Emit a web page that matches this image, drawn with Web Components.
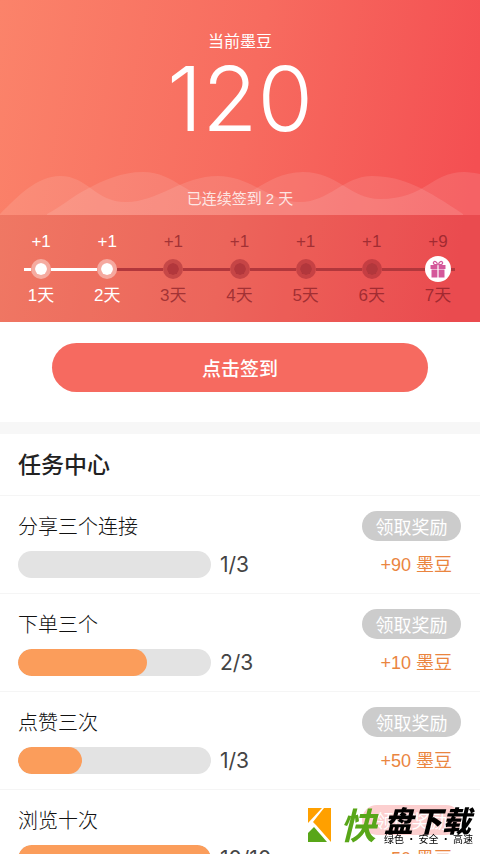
<!DOCTYPE html>
<html lang="zh-CN">
<head>
<meta charset="utf-8">
<meta name="viewport" content="width=device-width, initial-scale=1">
<title>任务中心</title>
<style>
body { margin: 0; background: #fff; color: #222; font-family: "Liberation Sans", "Noto Sans CJK SC", sans-serif; }
</style>
</head>
<body>
<reward-page></reward-page>
<script>
const define = (name, html, setup) => {
  const template = document.createElement('template');
  template.innerHTML = html;
  customElements.define(name, class extends HTMLElement {
    constructor() {
      super();
      this.attachShadow({ mode: 'open' }).append(template.content.cloneNode(true));
    }
    connectedCallback() { if (setup) setup(this, this.shadowRoot); }
  });
};

define('balance-header', `
<style>
:host { display: block; background: linear-gradient(100deg, #fb836a 0%, #f76b5f 50%, #f44f52 94%); color: #fff; }
.top { position: relative; display: grid; justify-items: center; padding: 30px 0 4px; }
.label { font-size: 16px; line-height: 24px; }
.value { font: 300 90px/90px Inter, "Liberation Sans", sans-serif; }
.streak { position: relative; margin-top: 43px; font-size: 15px; line-height: 24px; opacity: .8; }
svg { position: absolute; left: 0; bottom: 0; width: 100%; height: 44px; }
.band { background: rgba(150, 50, 60, .1); }
</style>
<div class="top">
  <svg viewBox="0 0 480 44" preserveAspectRatio="none" fill="#fff" fill-opacity=".11" aria-hidden="true">
    <path d="M0 43C18 25 37 5 60 5C88 5 95 31 126 31C158 31 182 5 218 5C251 5 270 31 300 31C329 31 344 5 372 5C404 5 427 19 463 43V44H0Z"/>
    <path d="M47 43C62 35 70 27 87 18C104 9 121 1 143 1C176 1 188 29 222 29C252 29 267 1 303 1C338 1 350 28 380 28C426 28 431 1 464 1C470 1 475 2 480 3V44H47Z"/>
  </svg>
  <span class="label">当前墨豆</span>
  <span class="value">120</span>
  <span class="streak">已连续签到 2 天</span>
</div>
<div class="band"><slot></slot></div>`);

define('sign-track', `
<style>
:host { display: grid; grid-template-columns: repeat(7, 1fr); padding: 17px 9px 16px 8px; }
</style>
<slot></slot>`);

define('sign-day', `
<style>
:host { display: grid; justify-items: center; color: rgba(125, 24, 34, .68); --line: #b2373c; --after: #b2373c; --halo: rgba(160, 40, 50, .5); }
:host([done]) { color: #fff; --line: #fff; --after: #fff; --halo: rgba(255, 255, 255, .4); }
:host([current]) { --after: #b2373c; }
.text { font-size: 17px; line-height: 20px; }
.node { justify-self: stretch; display: flex; align-items: center; height: 34px; }
.node::before, .node::after { content: ""; flex: 1; height: 3px; background: var(--line); }
.node::after { background: var(--after); }
:host(:first-child) .node::before { background: linear-gradient(to right, transparent 16px, var(--line) 16px); }
:host(:last-child) .node::after { background: linear-gradient(to left, transparent 16px, var(--line) 16px); }
.dot { box-sizing: border-box; width: 20px; height: 20px; border: 4px solid var(--halo); border-radius: 50%; background: var(--line); background-clip: padding-box; }
.gift { display: none; width: 26px; height: 26px; border-radius: 50%; background: #fff; }
:host([gift]) .dot { display: none; }
:host([gift]) .gift { display: block; }
</style>
<span class="text"><slot name="bonus"></slot></span>
<span class="node"><i class="dot"></i>
<svg class="gift" viewBox="0 0 26 26" aria-hidden="true"><path fill="#d4589a" d="M5.500 9h6.900v4H5.500zM13.600 9h6.900v4h-6.900zM6.500 13.600h5.900V21.500H6.500zM13.600 13.600h5.900V21.500h-5.900z"/><path d="M12.500 8.600C9 8.800 7.500 7.400 8.800 6S12.300 6.400 12.500 8.600M13.500 8.600C17 8.800 18.500 7.400 17.200 6S13.700 6.400 13.500 8.600" fill="none" stroke="#d4589a" stroke-width="1.200"/></svg></span>
<span class="text"><slot></slot></span>`);

define('sign-action', `
<style>
:host { display: block; padding: 21px 52px 30px; border-bottom: 12px solid #f7f7f7; }
button { display: block; width: 100%; height: 49px; border: 0; border-radius: 25px; background: #f66a60; color: #fff; font: 500 19px/28px "Noto Sans CJK SC", sans-serif; padding: 0; }
</style>
<button type="button"><slot></slot></button>`);

define('task-list', `
<style>
:host { display: block; }
h1 { margin: 0; padding: 15px 18px 14px; font-size: 23px; line-height: 32px; font-weight: 500; border-bottom: 1px solid #f5f5f5; }
</style>
<h1><slot name="title"></slot></h1>
<slot></slot>`);

define('task-item', `
<style>
:host { display: grid; grid-template-columns: 1fr 99px; row-gap: 10px; padding: 15px 19px 15px 18px; border-bottom: 1px solid #f5f5f5; }
label { font: 300 20px/30px "Noto Sans CJK SC", sans-serif; color: #111; }
button { height: 30px; padding: 0; border: 0; border-radius: 15px; background: #ccc; color: #fff; font: 18px/28px "Noto Sans CJK SC", sans-serif; }
:host([ready]) button { background: #fccfcf; }
.progress { display: flex; align-items: center; gap: 9px; font: 20px/27px Inter, sans-serif; font-size: 21px; color: #444; }
progress { appearance: none; display: block; width: 193px; height: 27px; border: 0; border-radius: 14px; overflow: hidden; background: #e3e3e3; }
progress::-webkit-progress-bar { background: #e3e3e3; }
progress::-webkit-progress-value { background: #fb9d5b; border-radius: 14px; }
.reward { justify-self: end; margin-right: 9px; font-size: 18px; line-height: 29px; color: #ea853f; white-space: nowrap; height: 27px; }
</style>
<label for="bar"><slot></slot></label>
<button type="button">领取奖励</button>
<div class="progress"><progress id="bar"></progress><span class="count"></span></div>
<span class="reward"></span>`, (host, root) => {
  const bar = root.querySelector('progress');
  bar.max = 3;
  bar.value = Number(host.getAttribute('fill'));
  root.querySelector('.count').textContent = host.getAttribute('count');
  root.querySelector('.reward').textContent = host.getAttribute('reward') + ' 墨豆';
});

define('site-mark', `
<style>
:host { position: fixed; right: 7px; bottom: 10px; display: flex; align-items: center; gap: 8px; font-family: "Noto Sans CJK SC", sans-serif; color: #000; }
svg { width: 24px; height: 34px; }
.first { font-size: 36px; line-height: 34px; padding-bottom: 4px; font-weight: 700; font-style: italic; color: #58a618; }
.words { display: grid; }
.name { font-size: 29px; line-height: 27px; font-weight: 900; font-style: italic; }
.note { font-size: 10px; line-height: 11px; }
</style>
<svg viewBox="0 0 24 34" aria-hidden="true"><path fill="#ffa000" d="M0 0H14L0 15ZM16 0H23V34L8 17L5 14Z"/><path fill="#58a618" d="M0 34V25L6 19L19 34Z"/></svg>
<span class="first">快</span>
<span class="words"><span class="name">盘下载</span><span class="note">绿色 · 安全 · 高速</span></span>`);

define('reward-page', `
<style>:host { display: block; height: 100vh; overflow: hidden; }</style>
<balance-header>
  <sign-track>
    <sign-day done><span slot="bonus">+1</span>1天</sign-day>
    <sign-day done current><span slot="bonus">+1</span>2天</sign-day>
    <sign-day><span slot="bonus">+1</span>3天</sign-day>
    <sign-day><span slot="bonus">+1</span>4天</sign-day>
    <sign-day><span slot="bonus">+1</span>5天</sign-day>
    <sign-day><span slot="bonus">+1</span>6天</sign-day>
    <sign-day gift><span slot="bonus">+9</span>7天</sign-day>
  </sign-track>
</balance-header>
<sign-action>点击签到</sign-action>
<task-list>
  <span slot="title">任务中心</span>
  <task-item fill="0" count="1/3" reward="+90">分享三个连接</task-item>
  <task-item fill="2" count="2/3" reward="+10">下单三个</task-item>
  <task-item fill="1" count="1/3" reward="+50">点赞三次</task-item>
  <task-item ready fill="3" count="10/10" reward="+50">浏览十次</task-item>
</task-list>
<site-mark></site-mark>`);
</script>
</body>
</html>
